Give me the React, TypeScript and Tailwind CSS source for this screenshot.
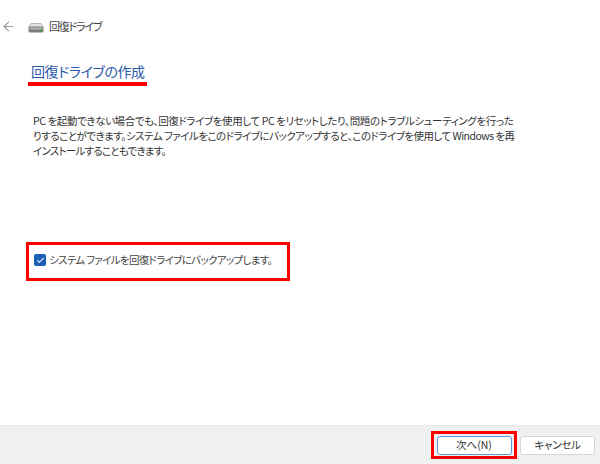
import { ArrowLeft, Check } from "lucide-react";

const font = "font-['Noto_Sans_CJK_JP','Noto_Sans',sans-serif] [font-feature-settings:'palt']";

function DriveIcon() {
    return (
        <svg width="16" height="10" viewBox="0 0 16 10" className="shrink-0">
            <path d="M3 0.5h10l2.5 4h-15z" fill="#e2e2e2" stroke="#a8a8a8" strokeWidth="0.8" />
            <rect x="0.5" y="3.5" width="15" height="6" rx="1.5" fill="#7c7c7c" />
            <rect x="1.5" y="4.5" width="13" height="2" fill="#b5b5b5" />
            <rect x="11.5" y="6.5" width="2.5" height="2" fill="#3fa34d" />
        </svg>
    );
}

export default function App() {
    return (
        <div className={`${font} w-[600px] h-[464px] bg-white flex flex-col text-[#333] overflow-hidden`}>
            <div className="flex-1 flex flex-col">
                <div className="flex items-center h-[20px] mt-[16px] pl-[1px]">
                    <ArrowLeft className="w-[15px] h-[15px] text-[#999]" strokeWidth={1.7} />
                    <div className="ml-[12px] mt-[4px]"><DriveIcon /></div>
                    <span className="ml-[5px] text-[11px] tracking-[-1.2px] text-[#444]">回復ドライブ</span>
                </div>
                <div className="ml-[28px] mt-[24px] w-[119px]">
                    <h1 className="pl-[3px] text-[14px] leading-[22px] tracking-[-0.4px] font-normal text-[#2b5aa8] whitespace-nowrap">回復ドライブの作成</h1>
                    <div className="h-[4px] bg-[#ff0000]" />
                </div>
                <div className="ml-[33px] mt-[27px] h-[46px] text-[10.5px] leading-[15px] text-[#333] whitespace-nowrap">
                    <div className="tracking-[-0.39px]">PC を起動できない場合でも、回復ドライブを使用して PC をリセットしたり、問題のトラブルシューティングを行った</div>
                    <div className="tracking-[-0.51px]">りすることができます。システム ファイルをこのドライブにバックアップすると、このドライブを使用して Windows を再</div>
                    <div className="tracking-[-0.76px]">インストールすることもできます。</div>
                </div>
                <div className="ml-[26px] mt-[83px] w-[264px] h-[39px] border-[3px] border-[#ff0000] flex items-center pl-[5px] pb-[3px]">
                    <div className="w-[12px] h-[12px] rounded-[2px] bg-[#1a5fb4] flex items-center justify-center">
                        <Check className="w-[9px] h-[9px] text-[#dbe6f5]" strokeWidth={3} />
                    </div>
                    <span className="ml-[3px] text-[10.5px] tracking-[-0.67px] text-[#444] whitespace-nowrap">システム ファイルを回復ドライブにバックアップします。</span>
                </div>
            </div>
            <div className="h-[39px] bg-[#f0f0f0] border-t border-[#e8e8e8] flex items-center justify-end pr-[5px] gap-[3px]">
                <div className="w-[86px] h-[28px] border-[3px] border-[#ff0000] flex items-center justify-center">
                    <button className="w-[75px] h-[19px] bg-white border border-[#5c97dc] rounded-[3px] text-[10.5px] leading-none text-[#333]">次へ(N)</button>
                </div>
                <button className="w-[75px] h-[19px] bg-white border border-[#d5d5d5] rounded-[3px] text-[10.5px] leading-none tracking-[-0.3px] text-[#333]">キャンセル</button>
            </div>
        </div>
    );
}
